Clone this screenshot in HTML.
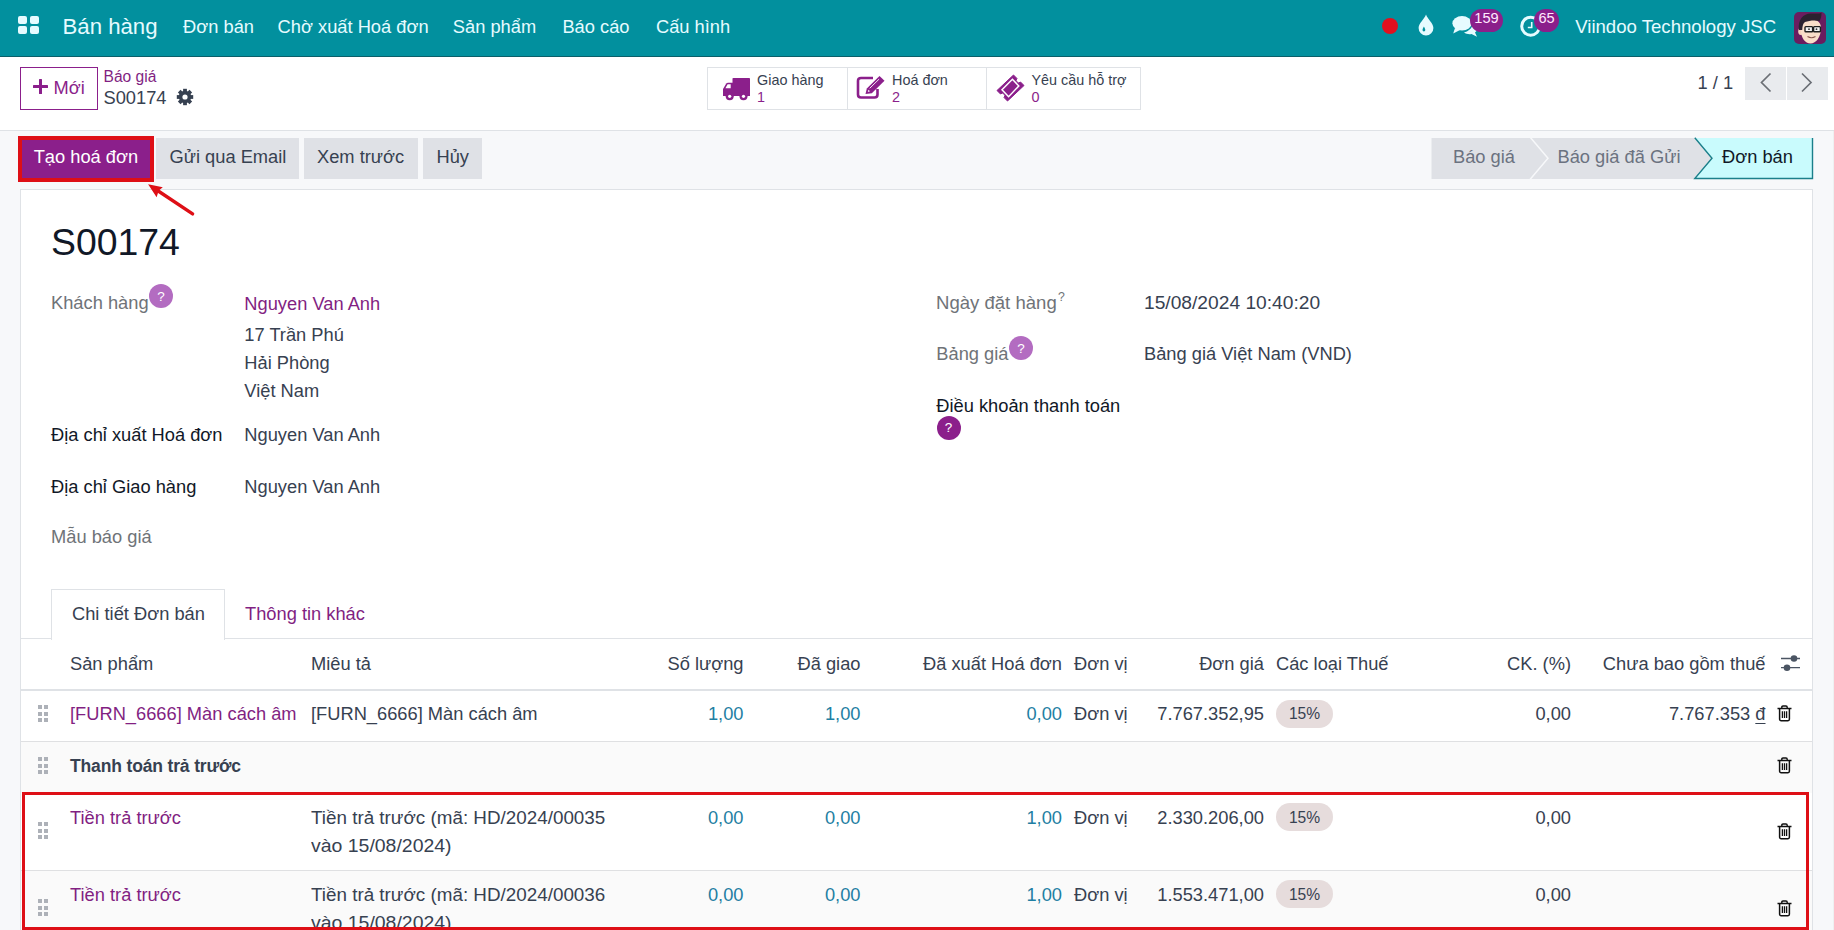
<!DOCTYPE html>
<html><head><meta charset="utf-8"><style>
html,body{margin:0;padding:0;width:1834px;height:930px;overflow:hidden;background:#f7f8fa;}
body{position:relative;font-family:"Liberation Sans", sans-serif;}
.t{position:absolute;white-space:nowrap;}
.r{position:absolute;}
</style></head><body>
<div class="r" style="left:0px;top:0px;width:1834px;height:57px;background:#02909e;"></div>
<div class="r" style="left:0px;top:56px;width:1834px;height:1px;background:#0a5f69;"></div>
<div class="r" style="left:0px;top:57px;width:1834px;height:73px;background:#fff;"></div>
<div class="r" style="left:0px;top:130px;width:1834px;height:1px;background:#dfe2e6;"></div>
<div class="r" style="left:0px;top:131px;width:1834px;height:799px;background:#f7f8fa;"></div>
<div class="r" style="left:1833px;top:131px;width:1px;height:799px;background:#eef0f1;"></div>
<div class="r" style="left:18px;top:16px;width:9px;height:8px;background:#e6fbff;border-radius:2px;"></div>
<div class="r" style="left:30px;top:16px;width:9px;height:8px;background:#e6fbff;border-radius:2px;"></div>
<div class="r" style="left:18px;top:26.3px;width:9px;height:7.9999999999999964px;background:#e6fbff;border-radius:2px;"></div>
<div class="r" style="left:30px;top:26.3px;width:9px;height:7.9999999999999964px;background:#e6fbff;border-radius:2px;"></div>
<div class="t" style="top:16.21px;font-size:22.2px;line-height:22.2px;color:#e6fbff;left:62.50px;">Bán hàng</div>
<div class="t" style="top:17.91px;font-size:18.3px;line-height:18.3px;color:#e6fbff;left:183.10px;">Đơn bán</div>
<div class="t" style="top:17.91px;font-size:18.3px;line-height:18.3px;color:#e6fbff;left:277.60px;">Chờ xuất Hoá đơn</div>
<div class="t" style="top:17.91px;font-size:18.3px;line-height:18.3px;color:#e6fbff;left:452.80px;">Sản phẩm</div>
<div class="t" style="top:17.91px;font-size:18.3px;line-height:18.3px;color:#e6fbff;left:562.40px;">Báo cáo</div>
<div class="t" style="top:17.91px;font-size:18.3px;line-height:18.3px;color:#e6fbff;left:656.00px;">Cấu hình</div>
<div class="r" style="left:1382px;top:18px;width:16px;height:16px;background:#e3101e;border-radius:50%;"></div>
<svg class="r" style="left:1416px;top:14px" width="20" height="22" viewBox="0 0 20 22">
<path d="M10 0.6 C11.5 5 17.4 9.5 17.4 14 A7.4 7.4 0 0 1 2.6 14 C2.6 9.5 8.5 5 10 0.6Z" fill="#e6fbff"/>
<path d="M7.9 12.6 C7.9 12.6 6.5 14.9 6.5 16 A1.4 1.4 0 0 0 9.3 16 C9.3 14.9 7.9 12.6 7.9 12.6Z" fill="#02909e"/>
</svg>
<svg class="r" style="left:1452px;top:15px" width="28" height="24" viewBox="0 0 28 24">
<ellipse cx="10" cy="8.3" rx="9.6" ry="7.2" fill="#e6fbff"/>
<path d="M3 13 L1.2 18.5 L8.5 14.8Z" fill="#e6fbff"/>
<path d="M12 17.5 C14 19 17 19.5 19.5 19 L25 21.8 L23 17.5 C25 16 26 14 25.5 12 C25 10.5 23.5 9.5 21 9 C20 13.5 16 16.5 12 17.5Z" fill="#e6fbff"/>
</svg>
<svg class="r" style="left:1519px;top:14px" width="24" height="24" viewBox="0 0 24 24">
<circle cx="11.7" cy="12.2" r="9" fill="none" stroke="#e6fbff" stroke-width="3"/>
<path d="M12.7 8 V13.5 H8.8" fill="none" stroke="#e6fbff" stroke-width="1.6"/>
</svg>
<div class="r" style="left:1470px;top:9px;width:33px;height:23px;background:#8b1f8b;border-radius:11.5px;"></div>
<div class="t" style="top:11.24px;font-size:14.6px;line-height:14.6px;color:#ffe9ff;left:1186.50px;width:600px;text-align:center;">159</div>
<div class="r" style="left:1534px;top:9px;width:25px;height:23px;background:#8b1f8b;border-radius:11.5px;"></div>
<div class="t" style="top:11.24px;font-size:14.6px;line-height:14.6px;color:#ffe9ff;left:1246.50px;width:600px;text-align:center;">65</div>
<div class="t" style="top:17.76px;font-size:18.6px;line-height:18.6px;color:#e6fbff;left:1575.20px;">Viindoo Technology JSC</div>
<svg class="r" style="left:1794px;top:12px" width="32" height="32" viewBox="0 0 32 32">
<rect x="0" y="0" width="32" height="32" rx="5" fill="#6a1d5f"/>
<ellipse cx="6.8" cy="19.5" rx="2.6" ry="3.4" fill="#f6d0bc"/>
<path d="M7 14 C7 9 10.5 7.5 16.5 7.5 C23 7.5 27 10 27 16 C27 25 22 31.5 16.5 31.5 C11 31.5 7 26 7 18Z" fill="#f9dec9"/>
<path d="M5 18 C3.5 8 9 1.5 17 1.5 C22 1.5 26 2 27.5 0.5 C27.5 4 27 7 25.5 9 C21 8 15 8.5 11 10 C9 11.5 8.5 14 8.2 18 Z" fill="#2b2230"/>
<rect x="11" y="14.6" width="7.6" height="5.2" rx="0.8" fill="#f4f4f4" stroke="#1e1e1e" stroke-width="1.4"/>
<rect x="19.6" y="14.6" width="6.8" height="5.2" rx="0.8" fill="#f4f4f4" stroke="#1e1e1e" stroke-width="1.4"/>
<circle cx="15" cy="17.2" r="0.9" fill="#333"/><circle cx="22.5" cy="17.2" r="0.9" fill="#333"/>
<path d="M13.5 24.5 Q17.5 27 21.5 24.5" stroke="#8a5a50" stroke-width="1.1" fill="none"/>
</svg>
<div class="r" style="left:20px;top:67px;width:78px;height:43px;border:1px solid #8b1f8b;box-sizing:border-box;background:#fff;"></div>
<div class="r" style="left:38.7px;top:79px;width:3.5999999999999943px;height:15px;background:#8b1f8b;border-radius:0.5px;"></div>
<div class="r" style="left:33px;top:84.6px;width:15px;height:3.6000000000000085px;background:#8b1f8b;border-radius:0.5px;"></div>
<div class="t" style="top:78.81px;font-size:18.3px;line-height:18.3px;color:#8b1f8b;left:53.50px;">Mới</div>
<div class="t" style="top:69.09px;font-size:15.6px;line-height:15.6px;color:#821f82;left:103.50px;">Báo giá</div>
<div class="t" style="top:89.11px;font-size:18.3px;line-height:18.3px;color:#374151;left:103.50px;">S00174</div>
<svg class="r" style="left:176px;top:88px" width="18" height="18" viewBox="-9 -9 18 18">
<g fill="#374151">
<circle r="6.2"/>
<rect x="-1.9" y="-8.2" width="3.8" height="4" transform="rotate(0)"/><rect x="-1.9" y="-8.2" width="3.8" height="4" transform="rotate(45)"/><rect x="-1.9" y="-8.2" width="3.8" height="4" transform="rotate(90)"/><rect x="-1.9" y="-8.2" width="3.8" height="4" transform="rotate(135)"/><rect x="-1.9" y="-8.2" width="3.8" height="4" transform="rotate(180)"/><rect x="-1.9" y="-8.2" width="3.8" height="4" transform="rotate(225)"/><rect x="-1.9" y="-8.2" width="3.8" height="4" transform="rotate(270)"/><rect x="-1.9" y="-8.2" width="3.8" height="4" transform="rotate(315)"/>
</g><circle r="2.6" fill="#fff"/></svg>
<div class="r" style="left:707px;top:67px;width:434px;height:43px;border:1px solid #dfe2e6;box-sizing:border-box;background:#fff;"></div>
<div class="r" style="left:847px;top:67px;width:1px;height:43px;background:#dfe2e6;"></div>
<div class="r" style="left:986px;top:67px;width:1px;height:43px;background:#dfe2e6;"></div>
<svg class="r" style="left:722px;top:77px" width="29" height="25" viewBox="0 0 29 25">
<g fill="#8b1f8b">
<rect x="10.5" y="1" width="17.5" height="17.5" rx="0.8"/>
<path d="M1 12 L4.3 6.5 C4.8 5.9 5.3 5.8 6 5.8 H11 V18.5 H1Z"/>
<rect x="1" y="15.5" width="27" height="3.5"/>
<circle cx="7.7" cy="19.3" r="4"/><circle cx="21.5" cy="19.3" r="4"/>
</g>
<path d="M3.4 11.2 L5.6 7.2 H8.7 V11.2Z" fill="#fff"/>
<circle cx="7.7" cy="19.3" r="1.6" fill="#fff"/><circle cx="21.5" cy="19.3" r="1.6" fill="#fff"/>
</svg>
<div class="t" style="top:73.11px;font-size:14.4px;line-height:14.4px;color:#374151;left:757.00px;">Giao hàng</div>
<div class="t" style="top:89.81px;font-size:14.4px;line-height:14.4px;color:#8b1f8b;left:757.00px;">1</div>
<svg class="r" style="left:856px;top:75px" width="30" height="24" viewBox="0 0 30 24">
<path d="M17 3 H5 Q2 3 2 6 V19.5 Q2 22.5 5 22.5 H18.5 Q21.5 22.5 21.5 19.5 V14" fill="none" stroke="#8b1f8b" stroke-width="2.6"/>
<path d="M9.5 19 L10.8 13.5 L23.5 1 L28.5 5.8 L15.8 18.2 Z" fill="#8b1f8b"/>
<path d="M11.8 17 L12.4 14.7 L14 16.3Z" fill="#fff"/>
<path d="M13.7 13.3 L23.1 4.1" stroke="#fff" stroke-width="0.9"/>
</svg>
<div class="t" style="top:73.11px;font-size:14.4px;line-height:14.4px;color:#374151;left:892.00px;">Hoá đơn</div>
<div class="t" style="top:89.81px;font-size:14.4px;line-height:14.4px;color:#8b1f8b;left:892.00px;">2</div>
<svg class="r" style="left:994px;top:72px" width="34" height="32" viewBox="0 0 34 32">
<path d="M19.5 3 L22.98 6.48 A2.5 2.5 0 0 0 26.52 10.02 L30 13.5 L13.5 29 L10.02 25.52 A2.5 2.5 0 0 0 6.48 21.98 L3 18.5 Z" fill="#8b1f8b" stroke="#8b1f8b" stroke-width="1" stroke-linejoin="round"/>
<path d="M18.4 7.3 L24.8 13.9 L14.6 24.7 L8 17.7 Z" fill="none" stroke="#fff" stroke-width="1.5"/>
</svg>
<div class="t" style="top:73.11px;font-size:14.4px;line-height:14.4px;color:#374151;left:1031.50px;">Yêu cầu hỗ trợ</div>
<div class="t" style="top:89.81px;font-size:14.4px;line-height:14.4px;color:#8b1f8b;left:1031.50px;">0</div>
<div class="t" style="top:74.11px;font-size:18.3px;line-height:18.3px;color:#374151;left:1697.50px;">1 / 1</div>
<div class="r" style="left:1745px;top:67px;width:41px;height:33px;background:#e9ebee;"></div>
<div class="r" style="left:1787px;top:67px;width:41px;height:33px;background:#e9ebee;"></div>
<svg class="r" style="left:1745px;top:67px" width="83" height="33" viewBox="0 0 83 33">
<path d="M25.5 6.5 L16.5 15.5 L25.5 24.5" fill="none" stroke="#6b6f75" stroke-width="1.7"/>
<path d="M57 6.5 L66 15.5 L57 24.5" fill="none" stroke="#6b6f75" stroke-width="1.7"/>
</svg>
<div class="r" style="left:18px;top:136px;width:136px;height:45.5px;background:#de0f16;"></div>
<div class="r" style="left:22px;top:140px;width:128px;height:38px;background:#8b1f8b;"></div>
<div class="t" style="top:148.11px;font-size:18.3px;line-height:18.3px;color:#fff;left:33.70px;">Tạo hoá đơn</div>
<div class="r" style="left:156px;top:138px;width:143px;height:41px;background:#dfe1e6;"></div>
<div class="t" style="top:148.11px;font-size:18.3px;line-height:18.3px;color:#374151;left:169.50px;">Gửi qua Email</div>
<div class="r" style="left:304px;top:138px;width:114px;height:41px;background:#dfe1e6;"></div>
<div class="t" style="top:148.11px;font-size:18.3px;line-height:18.3px;color:#374151;left:317.00px;">Xem trước</div>
<div class="r" style="left:423px;top:138px;width:59px;height:41px;background:#dfe1e6;"></div>
<div class="t" style="top:148.11px;font-size:18.3px;line-height:18.3px;color:#374151;left:436.50px;">Hủy</div>
<svg class="r" style="left:1431px;top:137px" width="383" height="43" viewBox="0 0 383 43">
<rect x="0.5" y="1" width="282" height="41" fill="#dfe1e6"/>
<path d="M263.8 1 H382 V41.5 H263.8 L281 21.2Z" fill="#c9fbfd"/>
<path d="M263.8 0.8 L281 21.2 L263.8 41.5 H381.5 V1" fill="none" stroke="#1b7f8a" stroke-width="1.4"/>
<path d="M99 0 L117 21.2 L99 42.5" fill="none" stroke="#f7f8fa" stroke-width="1.5"/>
</svg>
<div class="t" style="top:148.11px;font-size:18.3px;line-height:18.3px;color:#6b7280;left:1453.00px;">Báo giá</div>
<div class="t" style="top:148.11px;font-size:18.3px;line-height:18.3px;color:#6b7280;left:1557.50px;">Báo giá đã Gửi</div>
<div class="t" style="top:148.11px;font-size:18.3px;line-height:18.3px;color:#111827;left:1722.00px;">Đơn bán</div>
<div class="r" style="left:20px;top:189px;width:1793px;height:771px;background:#fff;border:1px solid #dfe2e6;box-sizing:border-box;"></div>
<div class="t" style="top:224.24px;font-size:37.4px;line-height:37.4px;color:#111827;left:51.00px;">S00174</div>
<div class="t" style="top:293.91px;font-size:18.3px;line-height:18.3px;color:#6f7378;left:51.00px;">Khách hàng</div>
<div class="r" style="left:149px;top:284px;width:24px;height:24px;background:#b36cc1;border-radius:50%;"></div>
<div class="t" style="top:289.67px;font-size:13.5px;line-height:13.5px;color:#fff;left:-139.00px;width:600px;text-align:center;">?</div>
<div class="t" style="top:294.51px;font-size:18.3px;line-height:18.3px;color:#821f82;left:244.30px;">Nguyen Van Anh</div>
<div class="t" style="top:325.71px;font-size:18.3px;line-height:18.3px;color:#374151;left:244.30px;">17 Trần Phú</div>
<div class="t" style="top:354.11px;font-size:18.3px;line-height:18.3px;color:#374151;left:244.30px;">Hải Phòng</div>
<div class="t" style="top:382.01px;font-size:18.3px;line-height:18.3px;color:#374151;left:244.30px;">Việt Nam</div>
<div class="t" style="top:426.41px;font-size:18.3px;line-height:18.3px;color:#111827;left:51.00px;">Địa chỉ xuất Hoá đơn</div>
<div class="t" style="top:426.41px;font-size:18.3px;line-height:18.3px;color:#374151;left:244.30px;">Nguyen Van Anh</div>
<div class="t" style="top:477.51px;font-size:18.3px;line-height:18.3px;color:#111827;left:51.00px;">Địa chỉ Giao hàng</div>
<div class="t" style="top:477.51px;font-size:18.3px;line-height:18.3px;color:#374151;left:244.30px;">Nguyen Van Anh</div>
<div class="t" style="top:527.61px;font-size:18.3px;line-height:18.3px;color:#6f7378;left:51.00px;">Mẫu báo giá</div>
<div class="t" style="top:293.71px;font-size:18.3px;line-height:18.3px;color:#6f7378;left:936.30px;transform:scaleX(1.015);transform-origin:0 0;">Ngày đặt hàng</div>
<div class="t" style="top:291.39px;font-size:12.3px;line-height:12.3px;color:#6f7378;left:1058.00px;">?</div>
<div class="t" style="top:293.71px;font-size:18.3px;line-height:18.3px;color:#374151;left:1144.00px;transform:scaleX(1.05);transform-origin:0 0;">15/08/2024 10:40:20</div>
<div class="t" style="top:345.11px;font-size:18.3px;line-height:18.3px;color:#6f7378;left:936.30px;">Bảng giá</div>
<div class="r" style="left:1009px;top:336px;width:24px;height:24px;background:#b36cc1;border-radius:50%;"></div>
<div class="t" style="top:341.67px;font-size:13.5px;line-height:13.5px;color:#fff;left:721.00px;width:600px;text-align:center;">?</div>
<div class="t" style="top:345.11px;font-size:18.3px;line-height:18.3px;color:#374151;left:1144.00px;">Bảng giá Việt Nam (VND)</div>
<div class="t" style="top:396.91px;font-size:18.3px;line-height:18.3px;color:#111827;left:936.30px;">Điều khoản thanh toán</div>
<div class="r" style="left:936.5px;top:415.5px;width:24.0px;height:24.0px;background:#8b1f8b;border-radius:50%;"></div>
<div class="t" style="top:421.17px;font-size:13.5px;line-height:13.5px;color:#fff;left:648.50px;width:600px;text-align:center;">?</div>
<div class="r" style="left:20px;top:638px;width:1793px;height:1px;background:#dfe2e6;"></div>
<div class="r" style="left:51px;top:589px;width:174px;height:51px;background:#fff;border:1px solid #dfe2e6;border-bottom:none;box-sizing:border-box;"></div>
<div class="t" style="top:604.71px;font-size:18.3px;line-height:18.3px;color:#374151;left:72.00px;">Chi tiết Đơn bán</div>
<div class="t" style="top:604.71px;font-size:18.3px;line-height:18.3px;color:#821f82;left:245.00px;">Thông tin khác</div>
<div class="r" style="left:21px;top:689px;width:1791px;height:2px;background:#dfe2e6;"></div>
<div class="r" style="left:21px;top:741px;width:1791px;height:1px;background:#dfe0e2;"></div>
<div class="r" style="left:21px;top:742px;width:1791px;height:51px;background:#fafafa;"></div>
<div class="r" style="left:21px;top:870px;width:1791px;height:1px;background:#dfe0e2;"></div>
<div class="r" style="left:21px;top:871px;width:1791px;height:59px;background:#fafafa;"></div>
<div class="t" style="top:655.31px;font-size:18.3px;line-height:18.3px;color:#374151;left:70.00px;">Sản phẩm</div>
<div class="t" style="top:655.31px;font-size:18.3px;line-height:18.3px;color:#374151;left:311.00px;">Miêu tả</div>
<div class="t" style="top:655.31px;font-size:18.3px;line-height:18.3px;color:#374151;right:1090.50px;">Số lượng</div>
<div class="t" style="top:655.31px;font-size:18.3px;line-height:18.3px;color:#374151;right:973.50px;">Đã giao</div>
<div class="t" style="top:655.31px;font-size:18.3px;line-height:18.3px;color:#374151;right:772.00px;">Đã xuất Hoá đơn</div>
<div class="t" style="top:655.31px;font-size:18.3px;line-height:18.3px;color:#374151;left:1074.00px;">Đơn vị</div>
<div class="t" style="top:655.31px;font-size:18.3px;line-height:18.3px;color:#374151;right:570.00px;">Đơn giá</div>
<div class="t" style="top:655.31px;font-size:18.3px;line-height:18.3px;color:#374151;left:1276.00px;">Các loại Thuế</div>
<div class="t" style="top:655.31px;font-size:18.3px;line-height:18.3px;color:#374151;right:263.00px;">CK. (%)</div>
<div class="t" style="top:655.31px;font-size:18.3px;line-height:18.3px;color:#374151;right:68.50px;">Chưa bao gồm thuế</div>
<svg class="r" style="left:1780px;top:654px" width="21" height="18" viewBox="0 0 21 18">
<path d="M1 4.5 H20 M1 13.7 H20" stroke="#4b5563" stroke-width="1.3"/>
<circle cx="14" cy="4.5" r="3.3" fill="#4b5563"/><circle cx="7" cy="13.7" r="3.3" fill="#4b5563"/>
</svg>
<div class="r" style="left:37.5px;top:705px;width:4.200000000000003px;height:4px;background:#adb1b8;"></div>
<div class="r" style="left:37.5px;top:711.6px;width:4.200000000000003px;height:4.0px;background:#adb1b8;"></div>
<div class="r" style="left:37.5px;top:718.2px;width:4.200000000000003px;height:4.0px;background:#adb1b8;"></div>
<div class="r" style="left:44.2px;top:705px;width:4.200000000000003px;height:4px;background:#adb1b8;"></div>
<div class="r" style="left:44.2px;top:711.6px;width:4.200000000000003px;height:4.0px;background:#adb1b8;"></div>
<div class="r" style="left:44.2px;top:718.2px;width:4.200000000000003px;height:4.0px;background:#adb1b8;"></div>
<div class="t" style="top:705.31px;font-size:18.3px;line-height:18.3px;color:#821f82;left:70.00px;">[FURN_6666] Màn cách âm</div>
<div class="t" style="top:705.31px;font-size:18.3px;line-height:18.3px;color:#374151;left:311.00px;">[FURN_6666] Màn cách âm</div>
<div class="t" style="top:705.31px;font-size:18.3px;line-height:18.3px;color:#1f7fa3;right:1090.50px;">1,00</div>
<div class="t" style="top:705.31px;font-size:18.3px;line-height:18.3px;color:#1f7fa3;right:973.50px;">1,00</div>
<div class="t" style="top:705.31px;font-size:18.3px;line-height:18.3px;color:#1f7fa3;right:772.00px;">0,00</div>
<div class="t" style="top:705.31px;font-size:18.3px;line-height:18.3px;color:#374151;left:1074.00px;">Đơn vị</div>
<div class="t" style="top:705.31px;font-size:18.3px;line-height:18.3px;color:#374151;right:570.00px;">7.767.352,95</div>
<div class="r" style="left:1276px;top:699.7px;width:57px;height:28.0px;background:#e6dcdc;border-radius:14px;"></div>
<div class="t" style="top:706.49px;font-size:15.6px;line-height:15.6px;color:#374151;left:1004.50px;width:600px;text-align:center;">15%</div>
<div class="t" style="top:705.31px;font-size:18.3px;line-height:18.3px;color:#374151;right:263.00px;">0,00</div>
<div class="t" style="top:705.31px;font-size:18.3px;line-height:18.3px;color:#374151;right:68.50px;">7.767.353 <u style="text-underline-offset:3px">đ</u></div>
<svg class="r" style="left:1776px;top:705px" width="17" height="17" viewBox="0 0 17 17">
<path d="M1.5 3.5 H15.5" stroke="#111" stroke-width="1.5"/>
<path d="M5.8 3.2 V2.2 Q5.8 1 7 1 H10 Q11.2 1 11.2 2.2 V3.2" fill="none" stroke="#111" stroke-width="1.4"/>
<path d="M3.6 3.8 V14.3 Q3.6 15.7 5 15.7 H12 Q13.4 15.7 13.4 14.3 V3.8" fill="none" stroke="#111" stroke-width="1.5"/>
<path d="M6.4 6.3 V13 M8.5 6.3 V13 M10.6 6.3 V13" stroke="#111" stroke-width="1.3"/>
</svg>
<div class="r" style="left:37.5px;top:757px;width:4.200000000000003px;height:4px;background:#adb1b8;"></div>
<div class="r" style="left:37.5px;top:763.6px;width:4.200000000000003px;height:4.0px;background:#adb1b8;"></div>
<div class="r" style="left:37.5px;top:770.2px;width:4.200000000000003px;height:4.0px;background:#adb1b8;"></div>
<div class="r" style="left:44.2px;top:757px;width:4.200000000000003px;height:4px;background:#adb1b8;"></div>
<div class="r" style="left:44.2px;top:763.6px;width:4.200000000000003px;height:4.0px;background:#adb1b8;"></div>
<div class="r" style="left:44.2px;top:770.2px;width:4.200000000000003px;height:4.0px;background:#adb1b8;"></div>
<div class="t" style="top:757.79px;font-size:17.5px;line-height:17.5px;color:#374151;font-weight:700;left:70.00px;letter-spacing:-0.15px;">Thanh toán trả trước</div>
<svg class="r" style="left:1776px;top:757px" width="17" height="17" viewBox="0 0 17 17">
<path d="M1.5 3.5 H15.5" stroke="#111" stroke-width="1.5"/>
<path d="M5.8 3.2 V2.2 Q5.8 1 7 1 H10 Q11.2 1 11.2 2.2 V3.2" fill="none" stroke="#111" stroke-width="1.4"/>
<path d="M3.6 3.8 V14.3 Q3.6 15.7 5 15.7 H12 Q13.4 15.7 13.4 14.3 V3.8" fill="none" stroke="#111" stroke-width="1.5"/>
<path d="M6.4 6.3 V13 M8.5 6.3 V13 M10.6 6.3 V13" stroke="#111" stroke-width="1.3"/>
</svg>
<div class="r" style="left:37.5px;top:822px;width:4.200000000000003px;height:4px;background:#adb1b8;"></div>
<div class="r" style="left:37.5px;top:828.6px;width:4.200000000000003px;height:4.0px;background:#adb1b8;"></div>
<div class="r" style="left:37.5px;top:835.2px;width:4.200000000000003px;height:4.0px;background:#adb1b8;"></div>
<div class="r" style="left:44.2px;top:822px;width:4.200000000000003px;height:4px;background:#adb1b8;"></div>
<div class="r" style="left:44.2px;top:828.6px;width:4.200000000000003px;height:4.0px;background:#adb1b8;"></div>
<div class="r" style="left:44.2px;top:835.2px;width:4.200000000000003px;height:4.0px;background:#adb1b8;"></div>
<div class="t" style="top:808.51px;font-size:18.3px;line-height:18.3px;color:#821f82;left:70.00px;">Tiền trả trước</div>
<div class="t" style="top:808.51px;font-size:18.3px;line-height:18.3px;color:#374151;left:311.00px;transform:scaleX(1.03);transform-origin:0 0;">Tiền trả trước (mã: HD/2024/00035</div>
<div class="t" style="top:836.51px;font-size:18.3px;line-height:18.3px;color:#374151;left:311.00px;transform:scaleX(1.064);transform-origin:0 0;">vào 15/08/2024)</div>
<div class="t" style="top:808.51px;font-size:18.3px;line-height:18.3px;color:#1f7fa3;right:1090.50px;">0,00</div>
<div class="t" style="top:808.51px;font-size:18.3px;line-height:18.3px;color:#1f7fa3;right:973.50px;">0,00</div>
<div class="t" style="top:808.51px;font-size:18.3px;line-height:18.3px;color:#1f7fa3;right:772.00px;">1,00</div>
<div class="t" style="top:808.51px;font-size:18.3px;line-height:18.3px;color:#374151;left:1074.00px;">Đơn vị</div>
<div class="t" style="top:808.51px;font-size:18.3px;line-height:18.3px;color:#374151;right:570.00px;">2.330.206,00</div>
<div class="r" style="left:1276px;top:802.9px;width:57px;height:28.0px;background:#e6dcdc;border-radius:14px;"></div>
<div class="t" style="top:809.69px;font-size:15.6px;line-height:15.6px;color:#374151;left:1004.50px;width:600px;text-align:center;">15%</div>
<div class="t" style="top:808.51px;font-size:18.3px;line-height:18.3px;color:#374151;right:263.00px;">0,00</div>
<svg class="r" style="left:1776px;top:822.5px" width="17" height="17" viewBox="0 0 17 17">
<path d="M1.5 3.5 H15.5" stroke="#111" stroke-width="1.5"/>
<path d="M5.8 3.2 V2.2 Q5.8 1 7 1 H10 Q11.2 1 11.2 2.2 V3.2" fill="none" stroke="#111" stroke-width="1.4"/>
<path d="M3.6 3.8 V14.3 Q3.6 15.7 5 15.7 H12 Q13.4 15.7 13.4 14.3 V3.8" fill="none" stroke="#111" stroke-width="1.5"/>
<path d="M6.4 6.3 V13 M8.5 6.3 V13 M10.6 6.3 V13" stroke="#111" stroke-width="1.3"/>
</svg>
<div class="r" style="left:37.5px;top:899px;width:4.200000000000003px;height:4px;background:#adb1b8;"></div>
<div class="r" style="left:37.5px;top:905.6px;width:4.200000000000003px;height:4.0px;background:#adb1b8;"></div>
<div class="r" style="left:37.5px;top:912.2px;width:4.200000000000003px;height:4.0px;background:#adb1b8;"></div>
<div class="r" style="left:44.2px;top:899px;width:4.200000000000003px;height:4px;background:#adb1b8;"></div>
<div class="r" style="left:44.2px;top:905.6px;width:4.200000000000003px;height:4.0px;background:#adb1b8;"></div>
<div class="r" style="left:44.2px;top:912.2px;width:4.200000000000003px;height:4.0px;background:#adb1b8;"></div>
<div class="t" style="top:885.61px;font-size:18.3px;line-height:18.3px;color:#821f82;left:70.00px;">Tiền trả trước</div>
<div class="t" style="top:885.61px;font-size:18.3px;line-height:18.3px;color:#374151;left:311.00px;transform:scaleX(1.03);transform-origin:0 0;">Tiền trả trước (mã: HD/2024/00036</div>
<div class="t" style="top:913.61px;font-size:18.3px;line-height:18.3px;color:#374151;left:311.00px;transform:scaleX(1.064);transform-origin:0 0;">vào 15/08/2024)</div>
<div class="t" style="top:885.61px;font-size:18.3px;line-height:18.3px;color:#1f7fa3;right:1090.50px;">0,00</div>
<div class="t" style="top:885.61px;font-size:18.3px;line-height:18.3px;color:#1f7fa3;right:973.50px;">0,00</div>
<div class="t" style="top:885.61px;font-size:18.3px;line-height:18.3px;color:#1f7fa3;right:772.00px;">1,00</div>
<div class="t" style="top:885.61px;font-size:18.3px;line-height:18.3px;color:#374151;left:1074.00px;">Đơn vị</div>
<div class="t" style="top:885.61px;font-size:18.3px;line-height:18.3px;color:#374151;right:570.00px;">1.553.471,00</div>
<div class="r" style="left:1276px;top:880.0px;width:57px;height:28.0px;background:#e6dcdc;border-radius:14px;"></div>
<div class="t" style="top:886.79px;font-size:15.6px;line-height:15.6px;color:#374151;left:1004.50px;width:600px;text-align:center;">15%</div>
<div class="t" style="top:885.61px;font-size:18.3px;line-height:18.3px;color:#374151;right:263.00px;">0,00</div>
<svg class="r" style="left:1776px;top:899.5px" width="17" height="17" viewBox="0 0 17 17">
<path d="M1.5 3.5 H15.5" stroke="#111" stroke-width="1.5"/>
<path d="M5.8 3.2 V2.2 Q5.8 1 7 1 H10 Q11.2 1 11.2 2.2 V3.2" fill="none" stroke="#111" stroke-width="1.4"/>
<path d="M3.6 3.8 V14.3 Q3.6 15.7 5 15.7 H12 Q13.4 15.7 13.4 14.3 V3.8" fill="none" stroke="#111" stroke-width="1.5"/>
<path d="M6.4 6.3 V13 M8.5 6.3 V13 M10.6 6.3 V13" stroke="#111" stroke-width="1.3"/>
</svg>
<div class="r" style="left:22px;top:792px;width:1787px;height:138px;border:3px solid #de0f16;box-sizing:border-box;"></div>
<svg class="r" style="left:140px;top:178px" width="60" height="42" viewBox="0 0 60 42">
<path d="M52.6 35.9 L16 11.5" stroke="#de0f16" stroke-width="3.4" stroke-linecap="round"/>
<path d="M8.1 6.3 L22.8 9.3 L18.8 12.6 L16.6 19.2 Z" fill="#de0f16"/>
</svg>
</body></html>
